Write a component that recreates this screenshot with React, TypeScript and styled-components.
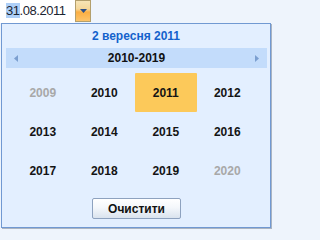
import React from "react";
import styled, { createGlobalStyle } from "styled-components";

const GlobalStyle = createGlobalStyle`
  html, body {
    margin: 0;
    padding: 0;
    background: #eef4fc;
  }
  body {
    font-family: "Liberation Sans", Arial, sans-serif;
  }
`;

const years = [
  { year: 2009, muted: true },
  { year: 2010 },
  { year: 2011, selected: true },
  { year: 2012 },
  { year: 2013 },
  { year: 2014 },
  { year: 2015 },
  { year: 2016 },
  { year: 2017 },
  { year: 2018 },
  { year: 2019 },
  { year: 2020, muted: true },
];

const App = () => {
  return (
    <Wrapper>
      <GlobalStyle />
      <InputRow>
        <DateInput>
          <Selected>31</Selected>.08.2011
        </DateInput>
        <DropButton>
          <svg width="7" height="4" viewBox="0 0 7 4">
            <path d="M0 0h7L3.5 4z" fill="#2d4f86" />
          </svg>
        </DropButton>
      </InputRow>
      <Popup>
        <Title>2 вересня 2011</Title>
        <NavBar>
          <NavArrow>
            <svg width="4" height="7" viewBox="0 0 4 7">
              <path d="M4 0v7L0 3.5z" fill="#7b9fd0" />
            </svg>
          </NavArrow>
          <NavTitle>2010-2019</NavTitle>
          <NavArrow>
            <svg width="4" height="7" viewBox="0 0 4 7">
              <path d="M0 0v7l4-3.5z" fill="#7b9fd0" />
            </svg>
          </NavArrow>
        </NavBar>
        <YearGrid>
          {years.map((y) => (
            <YearCell key={y.year} $muted={y.muted} $selected={y.selected}>
              {y.year}
            </YearCell>
          ))}
        </YearGrid>
        <Footer>
          <ClearButton>Очистити</ClearButton>
        </Footer>
      </Popup>
    </Wrapper>
  );
};

export default App;

const Wrapper = styled.div`
  width: 272px;
  height: 229px;
  overflow: hidden;
`;

const InputRow = styled.div`
  display: flex;
  height: 23px;
`;

const DateInput = styled.div`
  width: 75px;
  height: 23px;
  box-sizing: border-box;
  padding: 3px 0 0 6px;
  background: #ffffff;
  font-size: 13px;
  line-height: 16px;
  letter-spacing: -0.45px;
  color: #1b2430;
`;

const Selected = styled.span`
  background: #aecff7;
`;

const DropButton = styled.div`
  width: 16px;
  height: 22px;
  box-sizing: border-box;
  border: 1px solid #b39f6c;
  background: linear-gradient(
    to bottom,
    #f6e4b6 0%,
    #f5d79a 40%,
    #fbae42 55%,
    #fcc46a 100%
  );
  display: flex;
  justify-content: center;
  padding-top: 8px;

  svg {
    display: block;
  }
`;

const Popup = styled.div`
  margin-left: 1px;
  width: 270px;
  height: 205px;
  box-sizing: border-box;
  border: 1px solid #7199d2;
  background: #e3efff;
  box-shadow: 1px 1px 0 #aab4c2;
  display: flex;
  flex-direction: column;
`;

const Title = styled.div`
  height: 23px;
  display: flex;
  align-items: center;
  justify-content: center;
  font-size: 12px;
  font-weight: bold;
  color: #1462cc;
`;

const NavBar = styled.div`
  margin: 1px 3px 0 4px;
  height: 20px;
  background: #c3dcfb;
  display: flex;
  align-items: center;
  justify-content: space-between;
  padding: 0 8px;
`;

const NavArrow = styled.div`
  display: flex;
  align-items: center;

  svg {
    display: block;
  }
`;

const NavTitle = styled.div`
  font-size: 12px;
  font-weight: bold;
  color: #111;
`;

const YearGrid = styled.div`
  margin: 5px 0 0 10px;
  width: 246px;
  display: grid;
  grid-template-columns: repeat(4, 1fr);
  grid-auto-rows: 39px;
`;

const YearCell = styled.div<{ $muted?: boolean; $selected?: boolean }>`
  display: flex;
  align-items: center;
  justify-content: center;
  font-size: 12px;
  font-weight: bold;
  color: ${(p) => (p.$muted ? "#a8a8a8" : "#141414")};
  background: ${(p) => (p.$selected ? "#fcc95a" : "transparent")};
  border-radius: 1px;
`;

const Footer = styled.div`
  display: flex;
  justify-content: center;
  margin-top: 8px;
  padding-left: 1px;
`;

const ClearButton = styled.button`
  width: 89px;
  height: 21px;
  box-sizing: border-box;
  border: 1px solid #8ea2bf;
  border-radius: 2px;
  background: linear-gradient(to bottom, #ffffff 0%, #f4f7fb 45%, #dae3ee 100%);
  font-family: "Liberation Sans", Arial, sans-serif;
  font-size: 12px;
  font-weight: bold;
  color: #111;
  padding: 0;
  cursor: pointer;
`;
